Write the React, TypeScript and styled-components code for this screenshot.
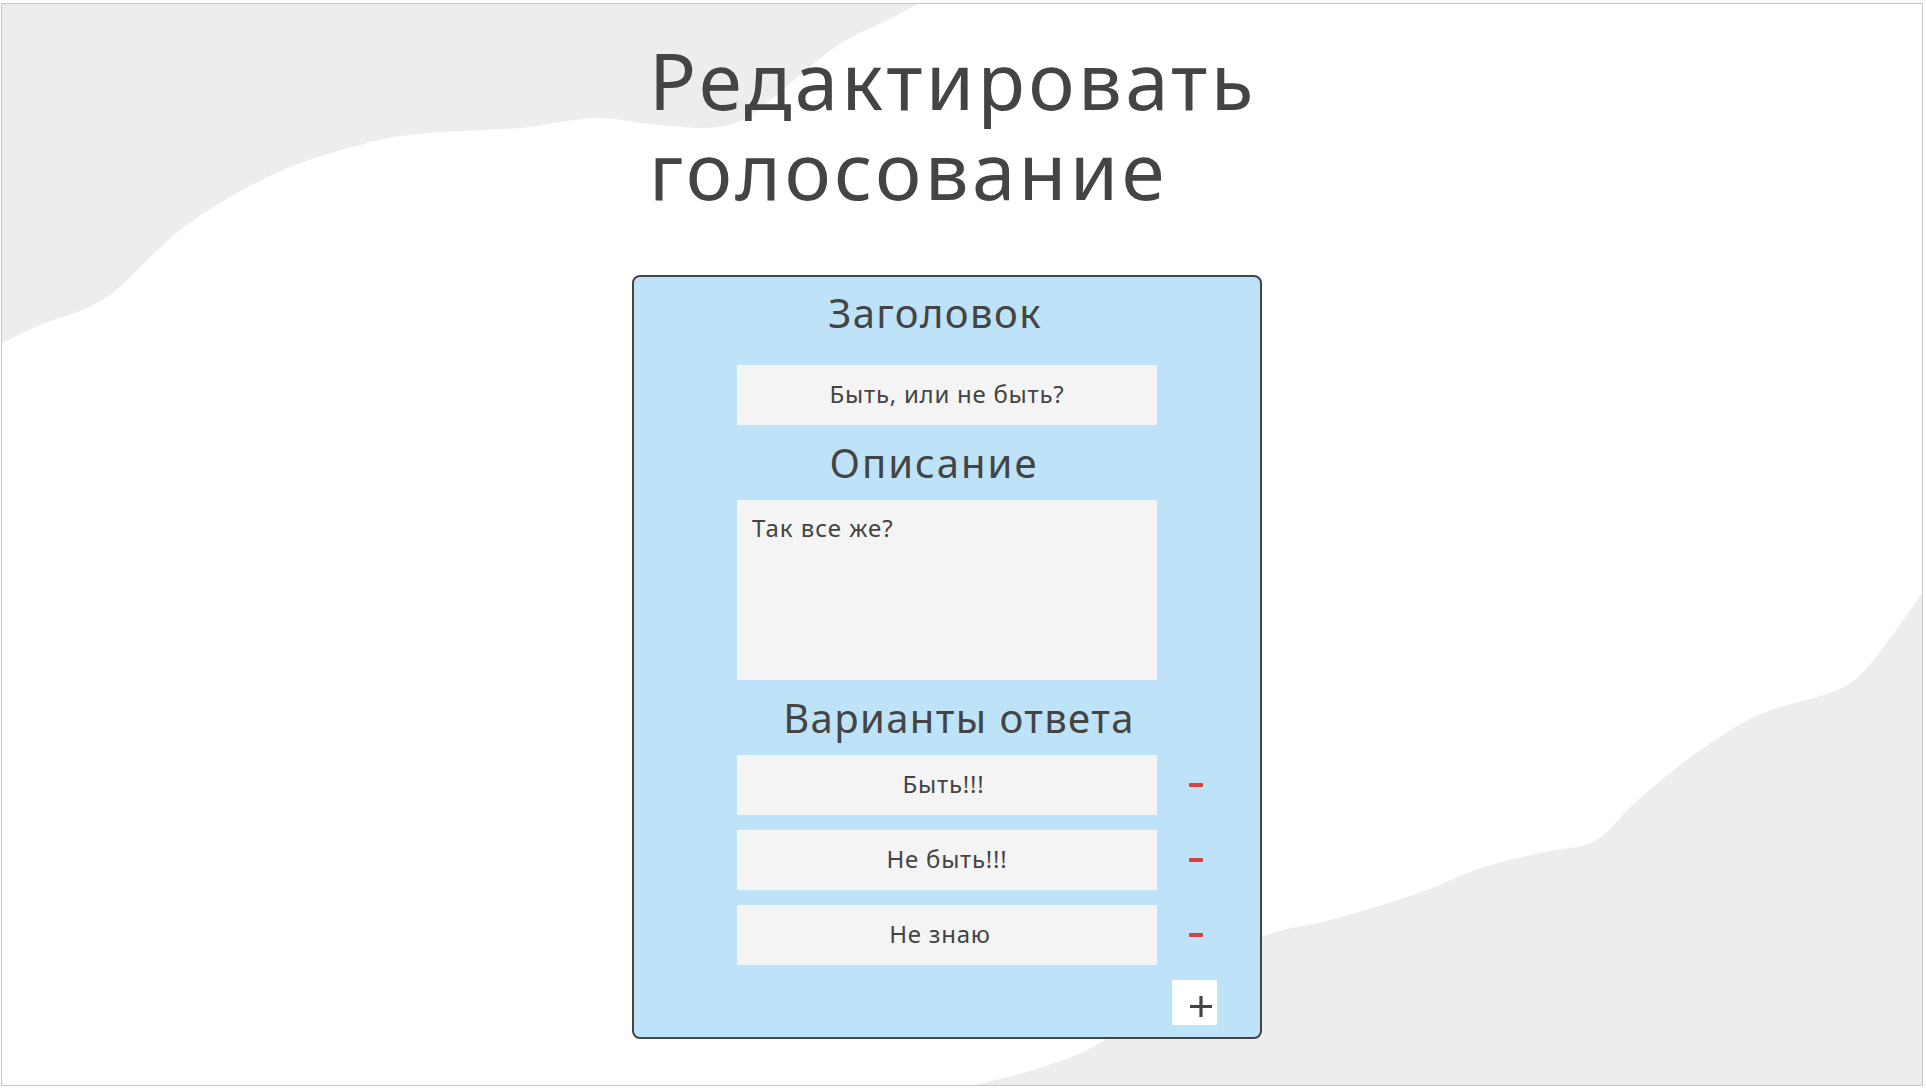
import * as React from "react";
import styled, { createGlobalStyle } from "styled-components";

const GlobalStyle = createGlobalStyle`
  body {
    margin: 0;
    background: #fff;
    font-family: "Noto Sans", "Open Sans", sans-serif;
    color: #444;
  }
`;

type Point = [number, number];

// smooth line through the points (catmull-rom to cubic bezier)
const smooth = (pts: Point[]): string => {
  let d = "";
  for (let i = 0; i < pts.length - 1; i++) {
    const p0 = pts[i - 1] || pts[i];
    const p1 = pts[i];
    const p2 = pts[i + 1];
    const p3 = pts[i + 2] || p2;
    const c1x = p1[0] + (p2[0] - p0[0]) / 6;
    const c1y = p1[1] + (p2[1] - p0[1]) / 6;
    const c2x = p2[0] - (p3[0] - p1[0]) / 6;
    const c2y = p2[1] - (p3[1] - p1[1]) / 6;
    d += ` C ${c1x} ${c1y} ${c2x} ${c2y} ${p2[0]} ${p2[1]}`;
  }
  return d;
};

const topBlob: Point[] = [
  [918, 4], [888, 20], [843, 42], [800, 75], [768, 102], [738, 122],
  [704, 128], [650, 124], [600, 118], [560, 122], [520, 128], [429, 133],
  [367, 143], [276, 173], [184, 227], [107, 297], [40, 325], [2, 343],
];

const bottomBlob: Point[] = [
  [1922, 592], [1909, 612], [1866, 669], [1835, 691], [1761, 714],
  [1699, 751], [1638, 800], [1595, 841], [1545, 852], [1484, 867],
  [1416, 894], [1330, 920], [1262, 937], [1180, 985], [1102, 1042],
  [1040, 1068], [975, 1085],
];

const Frame = styled.div`
  position: relative;
  margin: 3px 3px 0 1px;
  height: 1081px;
  border: 1px solid #c6c6c6;
  overflow: hidden;
  background: #fff;
`;

const Backdrop = styled.svg`
  position: absolute;
  left: 0;
  top: 0;
  z-index: 0;
`;

const Page = styled.main`
  position: relative;
  z-index: 1;
  display: flex;
  flex-direction: column;
  align-items: flex-start;
  padding: 31px 0 0 630px;
`;

const Title = styled.h1`
  margin: 0;
  padding-left: 17px;
  font-size: 78px;
  line-height: 90px;
  font-weight: 400;
  letter-spacing: 3.3px;
  color: #444;
`;

const Card = styled.section`
  box-sizing: border-box;
  width: 630px;
  margin-top: 60px;
  padding: 12px 0 12px 0;
  border: 2px solid #444;
  border-radius: 8px;
  background: #bee3f8;
  display: flex;
  flex-direction: column;
`;

const Heading = styled.h2<{ $shift: number; $below: number; $spacing?: number }>`
  margin: 0 0 ${(p) => p.$below}px 0;
  padding: ${(p) =>
    p.$shift > 0 ? `0 0 0 ${p.$shift * 2}px` : `0 ${-p.$shift * 2}px 0 0`};
  font-size: 40px;
  line-height: 48px;
  font-weight: 400;
  letter-spacing: ${(p) => p.$spacing ?? 1.4}px;
  text-align: center;
  color: #444;
`;

const Field = styled.input`
  box-sizing: border-box;
  width: 420px;
  height: 60px;
  margin-left: 103px;
  padding: 0 10px 4px;
  border: none;
  outline: none;
  background: #f4f4f4;
  font-family: "Noto Sans", "Open Sans", sans-serif;
  font-size: 24px;
  letter-spacing: 0.75px;
  color: #444;
  text-align: center;
`;

const Area = styled.textarea`
  box-sizing: border-box;
  display: block;
  width: 420px;
  height: 180px;
  margin: 0 0 14px 103px;
  padding: 13px 15px;
  border: none;
  outline: none;
  resize: none;
  background: #f4f4f4;
  font-family: "Noto Sans", "Open Sans", sans-serif;
  font-size: 24px;
  line-height: 30px;
  letter-spacing: 1px;
  color: #444;
`;

const Spacer = styled.div<{ $h: number }>`
  height: ${(p) => p.$h}px;
`;

const Options = styled.div`
  display: flex;
  flex-direction: column;
  gap: 15px;
  padding-left: 103px;
`;

const OptionRow = styled.div`
  display: grid;
  grid-template-columns: 420px 45px;
  column-gap: 15px;
  align-items: stretch;
`;

const OptionField = styled(Field)`
  margin-left: 0;
  white-space: pre;
`;

const MinusButton = styled.button`
  display: flex;
  align-items: center;
  justify-content: center;
  padding: 0 0 0 3px;
  border: none;
  background: transparent;
  cursor: pointer;
`;

const MinusBar = styled.span`
  display: block;
  width: 14px;
  height: 4px;
  border-radius: 1px;
  background: #d9423b;
`;

const PlusButton = styled.button`
  box-sizing: border-box;
  display: flex;
  align-items: flex-start;
  justify-content: flex-start;
  width: 45px;
  height: 45px;
  padding: 16px 0 0 18px;
  border: none;
  background: #fff;
  cursor: pointer;
`;

const options = ["Быть!!! ", "Не быть!!!", "Не знаю  "];

export default function App() {
  return (
    <>
      <GlobalStyle />
      <Frame>
        <Backdrop width="1920" height="1081" viewBox="2 4 1920 1081">
          <path d={`M 2 4 L 918 4 ${smooth(topBlob)} Z`} fill="#ededed" />
          <path
            d={`M ${bottomBlob[0][0]} ${bottomBlob[0][1]} ${smooth(bottomBlob)} L 1922 1085 Z`}
            fill="#ededed"
          />
        </Backdrop>
        <Page>
          <Title>
            Редактировать
            <br />
            голосование
          </Title>
          <Card>
            <Heading $shift={-12} $below={28}>Заголовок</Heading>
            <Field readOnly value="Быть, или не быть?" />
            <Spacer $h={14} />
            <Heading $shift={-13} $below={13} $spacing={2}>Описание</Heading>
            <Area readOnly value="Так все же?" />
            <Heading $shift={12} $below={13}>Варианты ответа</Heading>
            <Options>
              {options.map((o) => (
                <OptionRow key={o}>
                  <OptionField readOnly value={o} />
                  <MinusButton aria-label="удалить">
                    <MinusBar />
                  </MinusButton>
                </OptionRow>
              ))}
              <OptionRow>
                <span />
                <PlusButton aria-label="добавить">
                  <svg width="22" height="21" viewBox="0 0 22 21">
                    <path d="M11 0 V21 M0 10.5 H22" stroke="#444" strokeWidth="3.2" />
                  </svg>
                </PlusButton>
              </OptionRow>
            </Options>
          </Card>
        </Page>
      </Frame>
    </>
  );
}
